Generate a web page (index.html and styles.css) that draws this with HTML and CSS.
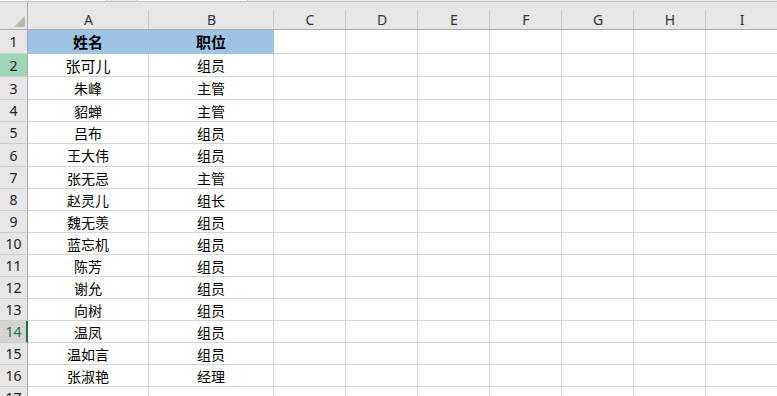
FILE: index.html
```html
<!DOCTYPE html>
<html lang="zh-CN">
<head>
<meta charset="utf-8">
<title>人员职位表</title>
<link rel="stylesheet" href="styles.css">
</head>
<body>
<div class="topbar">
  <div class="box box-name"></div>
  <div class="box box-fx"></div>
</div>
<div class="sheet">
  <div class="row">
    <div class="corner"><svg width="11" height="11" viewBox="0 0 11 11"><polygon points="11,0 11,11 0,11" fill="#b9b9b9"/></svg></div>
    <div class="ch">A</div><div class="ch">B</div><div class="ch">C</div><div class="ch">D</div><div class="ch">E</div><div class="ch">F</div><div class="ch">G</div><div class="ch">H</div><div class="ch">I</div>
  </div>
  <div class="row">
    <div class="rh">1</div><div class="c title">姓名</div><div class="c title">职位</div><div class="c"></div><div class="c"></div><div class="c"></div><div class="c"></div><div class="c"></div><div class="c"></div><div class="c"></div>
  </div>
  <div class="row">
    <div class="rh rh-active">2</div><div class="c big">张可儿</div><div class="c">组员</div><div class="c"></div><div class="c"></div><div class="c"></div><div class="c"></div><div class="c"></div><div class="c"></div><div class="c"></div>
  </div>
  <div class="row">
    <div class="rh">3</div><div class="c">朱峰</div><div class="c">主管</div><div class="c"></div><div class="c"></div><div class="c"></div><div class="c"></div><div class="c"></div><div class="c"></div><div class="c"></div>
  </div>
  <div class="row">
    <div class="rh">4</div><div class="c">貂蝉</div><div class="c">主管</div><div class="c"></div><div class="c"></div><div class="c"></div><div class="c"></div><div class="c"></div><div class="c"></div><div class="c"></div>
  </div>
  <div class="row">
    <div class="rh">5</div><div class="c">吕布</div><div class="c">组员</div><div class="c"></div><div class="c"></div><div class="c"></div><div class="c"></div><div class="c"></div><div class="c"></div><div class="c"></div>
  </div>
  <div class="row">
    <div class="rh">6</div><div class="c">王大伟</div><div class="c">组员</div><div class="c"></div><div class="c"></div><div class="c"></div><div class="c"></div><div class="c"></div><div class="c"></div><div class="c"></div>
  </div>
  <div class="row">
    <div class="rh">7</div><div class="c">张无忌</div><div class="c">主管</div><div class="c"></div><div class="c"></div><div class="c"></div><div class="c"></div><div class="c"></div><div class="c"></div><div class="c"></div>
  </div>
  <div class="row">
    <div class="rh">8</div><div class="c">赵灵儿</div><div class="c">组长</div><div class="c"></div><div class="c"></div><div class="c"></div><div class="c"></div><div class="c"></div><div class="c"></div><div class="c"></div>
  </div>
  <div class="row">
    <div class="rh">9</div><div class="c">魏无羡</div><div class="c">组员</div><div class="c"></div><div class="c"></div><div class="c"></div><div class="c"></div><div class="c"></div><div class="c"></div><div class="c"></div>
  </div>
  <div class="row">
    <div class="rh">10</div><div class="c">蓝忘机</div><div class="c">组员</div><div class="c"></div><div class="c"></div><div class="c"></div><div class="c"></div><div class="c"></div><div class="c"></div><div class="c"></div>
  </div>
  <div class="row">
    <div class="rh">11</div><div class="c">陈芳</div><div class="c">组员</div><div class="c"></div><div class="c"></div><div class="c"></div><div class="c"></div><div class="c"></div><div class="c"></div><div class="c"></div>
  </div>
  <div class="row">
    <div class="rh">12</div><div class="c">谢允</div><div class="c">组员</div><div class="c"></div><div class="c"></div><div class="c"></div><div class="c"></div><div class="c"></div><div class="c"></div><div class="c"></div>
  </div>
  <div class="row">
    <div class="rh">13</div><div class="c">向树</div><div class="c">组员</div><div class="c"></div><div class="c"></div><div class="c"></div><div class="c"></div><div class="c"></div><div class="c"></div><div class="c"></div>
  </div>
  <div class="row">
    <div class="rh rh-sel">14</div><div class="c">温凤</div><div class="c">组员</div><div class="c"></div><div class="c"></div><div class="c"></div><div class="c"></div><div class="c"></div><div class="c"></div><div class="c"></div>
  </div>
  <div class="row">
    <div class="rh">15</div><div class="c">温如言</div><div class="c">组员</div><div class="c"></div><div class="c"></div><div class="c"></div><div class="c"></div><div class="c"></div><div class="c"></div><div class="c"></div>
  </div>
  <div class="row">
    <div class="rh">16</div><div class="c">张淑艳</div><div class="c">经理</div><div class="c"></div><div class="c"></div><div class="c"></div><div class="c"></div><div class="c"></div><div class="c"></div><div class="c"></div>
  </div>
  <div class="row">
    <div class="rh">17</div><div class="c"></div><div class="c"></div><div class="c"></div><div class="c"></div><div class="c"></div><div class="c"></div><div class="c"></div><div class="c"></div><div class="c"></div>
  </div>
</div>
</body>
</html>
```
FILE: styles.css
```css
html, body {
  margin: 0;
  padding: 0;
  background: #ffffff;
  overflow: hidden;
}

body {
  width: 777px;
  height: 396px;
  font-family: "Noto Sans CJK SC", "Noto Sans", sans-serif;
  color: #000;
}

/* remains of the name box / formula bar strip */
.topbar {
  height: 1px;
  background: #e6e6e6;
  border-bottom: 1px solid #c4c4c4;
  display: flex;
  gap: 30px;
}
.box {
  height: 1px;
  background: #fff;
  border-right: 1px solid #c4c4c4;
}
.box-name { width: 106px; }
.box-fx { width: 109px; border-left: 1px solid #c4c4c4; }

.sheet {
  display: grid;
  grid-template-columns: 28px 121px 125px repeat(7, 72px);
  grid-template-rows: 28px 24px 23px 23px 22px 22px 23px 22px 22px 22px 22px 22px 22px 22px 22px 22px 22px 22px;
}
.row { display: contents; }

/* column headers */
.corner, .ch {
  box-sizing: border-box;
  background: #e6e6e6;
  border-bottom: 1px solid #ababab;
}
.corner {
  border-right: 1px solid #ababab;
  display: flex;
  align-items: flex-end;
  justify-content: flex-end;
  padding: 0 2px 2px 0;
}
.ch {
  background:
    linear-gradient(#c8c8c8, #c8c8c8) right bottom / 1px 18px no-repeat,
    #e6e6e6;
  display: flex;
  align-items: flex-end;
  justify-content: center;
  padding-bottom: 1px;
  font-family: "Noto Sans", sans-serif;
  font-size: 14px;
  line-height: 17px;
  color: #333;
}

/* row headers */
.rh {
  box-sizing: border-box;
  background: #e6e6e6;
  border-right: 1px solid #a6a6a6;
  border-bottom: 1px solid #cdcdcd;
  display: flex;
  align-items: center;
  justify-content: center;
  font-family: "Noto Sans", sans-serif;
  font-size: 14px;
  color: #222;
}
.rh-active { background: #9fd5b7; }
.rh-sel {
  background: #d3d3d3;
  color: #217346;
  border-right: 2px solid #217346;
  padding-left: 1px;
}

/* body cells */
.c {
  box-sizing: border-box;
  border-right: 1px solid #d4d4d4;
  border-bottom: 1px solid #d4d4d4;
  display: flex;
  align-items: center;
  justify-content: center;
  font-size: 14px;
}
.c.big { font-size: 15px; }
.c.title {
  background: #9dc3e6;
  border-color: #9dc3e6;
  font-weight: bold;
  font-size: 15px;
}
```
